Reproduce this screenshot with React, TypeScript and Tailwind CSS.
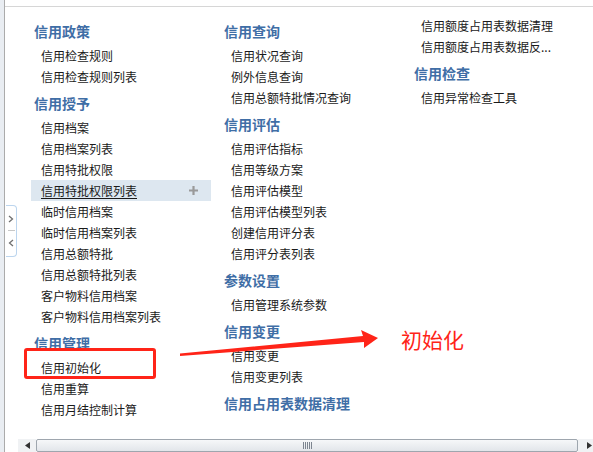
import * as React from 'react';

type Group = { title?: string; items: string[] };

const columns: Group[][] = [
  [
    { title: '信用政策', items: ['信用检查规则', '信用检查规则列表'] },
    {
      title: '信用授予',
      items: [
        '信用档案',
        '信用档案列表',
        '信用特批权限',
        '信用特批权限列表',
        '临时信用档案',
        '临时信用档案列表',
        '信用总额特批',
        '信用总额特批列表',
        '客户物料信用档案',
        '客户物料信用档案列表',
      ],
    },
    { title: '信用管理', items: ['信用初始化', '信用重算', '信用月结控制计算'] },
  ],
  [
    { title: '信用查询', items: ['信用状况查询', '例外信息查询', '信用总额特批情况查询'] },
    {
      title: '信用评估',
      items: ['信用评估指标', '信用等级方案', '信用评估模型', '信用评估模型列表', '创建信用评分表', '信用评分表列表'],
    },
    { title: '参数设置', items: ['信用管理系统参数'] },
    { title: '信用变更', items: ['信用变更', '信用变更列表'] },
    { title: '信用占用表数据清理', items: [] },
  ],
  [
    { items: ['信用额度占用表数据清理', '信用额度占用表数据反...'] },
    { title: '信用检查', items: ['信用异常检查工具'] },
  ],
];

const active = '信用特批权限列表';

const Item = ({ label }: { label: string }) =>
  label === active ? (
    <div className="flex h-[21px] w-[180px] items-center justify-between bg-[#dde7f0] pl-[10px] pr-[13px] text-[12px] leading-[21px] text-[#1a1a1a]">
      <span className="underline underline-offset-2">{label}</span>
      <svg width="9" height="9" viewBox="0 0 9 9">
        <path d="M4.5 0v9M0 4.5h9" stroke="#9a9a9a" strokeWidth="2.2" />
      </svg>
    </div>
  ) : (
    <div className="h-[21px] whitespace-nowrap pl-[10px] text-[12px] leading-[21px] text-[#1a1a1a]">{label}</div>
  );

export default function App() {
  return (
    <div
      className="relative flex h-[452px] w-[593px] overflow-hidden bg-white"
      style={{ fontFamily: '"Noto Sans CJK SC", "Noto Sans", sans-serif' }}
    >
      <div className="w-[5px] shrink-0 border-r border-[#ababab] bg-[#e9edf2]" />
      <div className="flex min-w-0 flex-1 flex-col">
        <div className="mt-[6px] flex flex-1 overflow-hidden border-t border-[#d6d6d6] pl-[26px] pt-[8px]">
          {columns.map((col, ci) => (
            <div key={ci} className="flex w-[190px] shrink-0 flex-col">
              {col.map((g, gi) => (
                <div key={gi}>
                  {g.title && (
                    <div className="pb-[3px] pl-[3px] pt-[6px] text-[14px] font-bold leading-[21px] text-[#3f6ea6]">
                      {g.title}
                    </div>
                  )}
                  {g.items.map((it) => (
                    <Item key={it} label={it} />
                  ))}
                </div>
              ))}
            </div>
          ))}
        </div>
        <div className="ml-[13px] flex h-[13px] shrink-0">
          <div className="flex w-[18px] items-center justify-center bg-[#f0f2f4]">
            <svg width="5" height="7" viewBox="0 0 5 7">
              <path d="M5 0v7L0 3.5z" fill="#333" />
            </svg>
          </div>
          <div className="flex flex-1 items-center justify-center rounded-[2px] border border-[#9ea6ae] bg-gradient-to-b from-[#f6f7f9] to-[#e2e6ea]">
            <svg width="9" height="7" viewBox="0 0 9 7">
              <path d="M0.5 0v7M2.5 0v7M4.5 0v7M6.5 0v7M8.5 0v7" stroke="#7d8590" strokeWidth="1" />
            </svg>
          </div>
          <div className="flex w-[15px] items-center justify-end bg-[#f0f2f4] pr-[1px]">
            <svg width="5" height="7" viewBox="0 0 5 7">
              <path d="M0 0v7L5 3.5z" fill="#333" />
            </svg>
          </div>
        </div>
      </div>

      {/* splitter handle */}
      <div className="absolute left-[6px] top-[205px] flex h-[52px] w-[11px] flex-col items-center rounded-r-[4px] border border-l-0 border-[#bcd5ee] bg-white">
        <svg className="mt-[9px]" width="6" height="8" viewBox="0 0 6 8">
          <path d="M1 1l3.5 3L1 7" stroke="#707070" strokeWidth="1.3" fill="none" />
        </svg>
        <div className="mt-[7px] h-px w-[7px] bg-[#c8c8c8]" />
        <svg className="mt-[8px]" width="6" height="8" viewBox="0 0 6 8">
          <path d="M5 1L1.5 4 5 7" stroke="#707070" strokeWidth="1.3" fill="none" />
        </svg>
      </div>

      {/* annotation */}
      <div className="absolute left-[24px] top-[348px] h-[31px] w-[132px] rounded-[3px] border-[3px] border-[#ff2418]" />
      <svg className="absolute left-0 top-0" width="593" height="452" viewBox="0 0 593 452">
        <polygon points="180,353.5 363,336 361,330 378,338 364,348 364,342 180,356" fill="#ff2418" />
      </svg>
      <div className="absolute left-[401px] top-[326px] text-[21px] leading-[26px] text-[#ff2418]">初始化</div>
    </div>
  );
}
